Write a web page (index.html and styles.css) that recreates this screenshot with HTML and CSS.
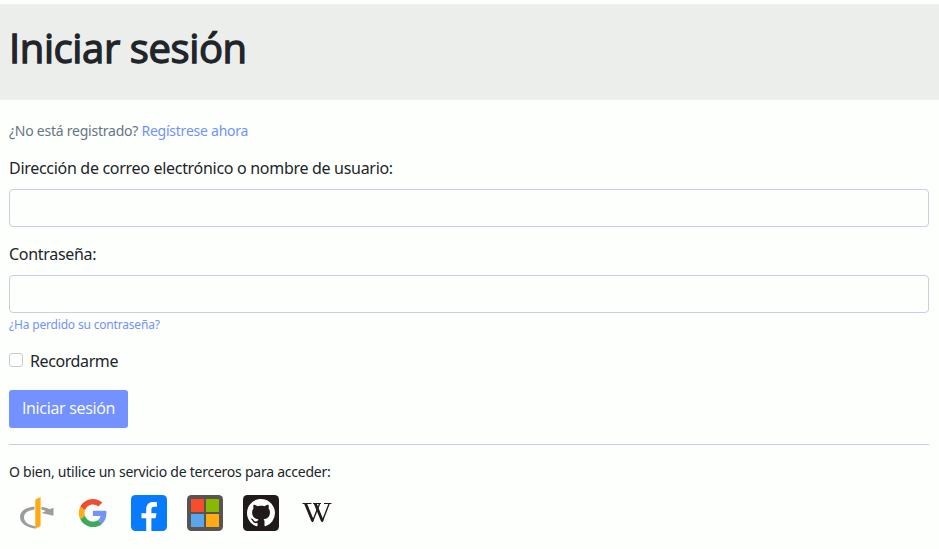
FILE: index.html
```html
<!DOCTYPE html>
<html lang="es">
<head>
<meta charset="utf-8">
<title>Iniciar sesión</title>
<link rel="stylesheet" href="styles.css">
</head>
<body>
<header class="page-header"><h1>Iniciar sesión</h1></header>
<main class="content">
  <p class="register">¿No está registrado? <a href="#">Regístrese ahora</a></p>
  <form>
    <div class="field">
      <label for="user">Dirección de correo electrónico o nombre de usuario:</label>
      <input class="control" id="user" type="text">
    </div>
    <div class="field field-password">
      <label for="password">Contraseña:</label>
      <input class="control" id="password" type="password">
      <a class="lost" href="#">¿Ha perdido su contraseña?</a>
    </div>
    <div class="remember">
      <input class="check" id="remember" type="checkbox">
      <label for="remember">Recordarme</label>
    </div>
    <button class="submit" type="button">Iniciar sesión</button>
  </form>
  <hr>
  <p class="third-party">O bien, utilice un servicio de terceros para acceder:</p>
  <div class="services">
    <a href="#" aria-label="OpenID"><svg viewBox="0 0 36 36"><path d="M15.500 11.500C7 12.300 1 16 1 22c0 6 6.500 10.500 15.500 11.700v-2.500C9.500 30.200 5 27 5 22.200c0-4.200 4-6.900 10.500-7.700zM22.500 11.800c3.200.4 5.700 1.200 8 2.500l4-1.500v8l-12-2.900 4.400-1.800c-1.200-.7-2.700-1.100-4.400-1.300z" fill="#9b9ca0"/><path d="M16.300 4.500 21.600 2v29L16.300 33.700z" fill="#ffa914"/></svg></a>
    <a href="#" aria-label="Google"><svg viewBox="0 0 36 36"><g transform="translate(3.800 3.900) scale(.588)"><path fill="#f24b34" d="M24 9.500c3.540 0 6.710 1.220 9.210 3.600l6.850-6.850C35.900 2.380 30.470 0 24 0 14.620 0 6.510 5.380 2.560 13.220l7.980 6.190C12.430 13.720 17.740 9.500 24 9.500z"/><path fill="#7393fb" d="M46.980 24.550c0-1.570-.15-3.090-.38-4.550H24v9.020h12.940c-.58 2.960-2.260 5.480-4.780 7.180l7.730 6c4.510-4.180 7.090-10.360 7.090-17.650z"/><path fill="#ffad10" d="M10.530 28.590c-.48-1.450-.76-2.990-.76-4.590s.27-3.140.76-4.590l-7.980-6.190C.92 16.460 0 20.120 0 24s.92 7.540 2.560 10.780z"/><path fill="#3da95b" d="M24 48c6.480 0 11.930-2.130 15.890-5.810l-7.730-6c-2.150 1.450-4.920 2.300-8.160 2.300-6.260 0-11.570-4.220-13.470-9.910l-7.970 6.190C6.510 42.620 14.620 48 24 48z"/></g></svg></a>
    <a href="#" aria-label="Facebook"><svg viewBox="0 0 36 36"><rect width="36" height="36" rx="4.500" fill="#087bfb"/><path fill="#fff" d="M15.200 36V23.200h-4.700v-5h4.700v-3.900c0-4.800 2.700-7.300 7-7.300 1.500 0 2.700.1 3.800.3v4.500h-2.600c-2.300 0-3 1.300-3 2.900v3.500h5.100l-.9 5h-4.200V36z"/></svg></a>
    <a href="#" aria-label="Microsoft"><svg viewBox="0 0 36 36"><rect width="36" height="36" rx="4.500" fill="#595450"/><path fill="#f64e2c" d="M4 4h13v13H4z"/><path fill="#86b900" d="M19 4h13v13H19z"/><path fill="#5ba5ed" d="M4 19h13v13H4z"/><path fill="#ffab13" d="M19 19h13v13H19z"/></svg></a>
    <a href="#" aria-label="GitHub"><svg viewBox="0 0 36 36"><rect width="36" height="36" rx="4.500" fill="#211a1b"/><path transform="translate(4 4) scale(1.750)" fill="#fff" d="M8 0C3.580 0 0 3.580 0 8c0 3.540 2.290 6.530 5.470 7.590.4.070.55-.17.55-.38 0-.19-.01-.82-.01-1.490-2.010.37-2.530-.49-2.690-.94-.09-.23-.48-.94-.82-1.130-.28-.15-.68-.52-.01-.53.63-.01 1.080.58 1.230.82.72 1.210 1.870.87 2.330.66.070-.52.28-.87.51-1.070-1.780-.2-3.640-.89-3.640-3.950 0-.87.31-1.590.82-2.150-.08-.2-.36-1.020.08-2.120 0 0 .67-.21 2.200.82.64-.18 1.320-.27 2-.27.68 0 1.360.09 2 .27 1.530-1.040 2.200-.82 2.200-.82.44 1.100.16 1.920.08 2.120.51.56.82 1.270.82 2.150 0 3.070-1.870 3.750-3.650 3.950.29.25.54.73.54 1.480 0 1.070-.01 1.930-.01 2.200 0 .21.15.46.55.38A8.013 8.013 0 0 0 16 8c0-4.420-3.580-8-8-8z"/></svg></a>
    <a href="#" aria-label="Wikipedia"><svg viewBox="0 0 36 36" fill="none" stroke="#211c1c"><path stroke-width="1" d="M3.500 8.500h9M14 8.500h8M25 8.500h7.500"/><path stroke-width="1.400" d="M13.300 27 20.500 9M23 27 30 9"/><path stroke-width="2.800" d="m6.500 8.500 7.200 17.500M16.200 8.500l7.200 17.500"/></svg></a>
  </div>
</main>
</body>
</html>
```
FILE: styles.css
```css
* { box-sizing: border-box; }
body {
  margin: 0;
  padding-top: 4px;
  background: #fdfffd;
  color: #212529;
  font: 16px/24px "Noto Sans", sans-serif;
}
a { color: #7191ff; text-decoration: none; }
.page-header { height: 96px; padding: 20px 9px 0; background: #eceeec; }
h1 {
  margin: 0;
  font: 500 40px/48px "Open Sans", sans-serif;
  letter-spacing: -.4px;
  -webkit-text-stroke: 1.3px #212529;
}
.content { padding: 20px 10px 0 9px; }
.register { margin: 0 0 14px; font-size: 14px; line-height: 22px; color: #667681; letter-spacing: -.24px; }
.field { margin-bottom: 15px; }
.field label { display: block; margin-bottom: 9px; line-height: 24px; letter-spacing: -.3px; }
.control {
  display: block;
  width: 100%;
  height: 38px;
  padding: 6px 12px;
  border: 1px solid #c9cfdc;
  border-radius: 4px;
  background: #fdfffd;
}
.field-password { margin-bottom: 14px; }
.lost { display: block; height: 22px; font-size: 12px; line-height: 23px; letter-spacing: -.18px; }
.remember { display: flex; align-items: center; gap: 7px; height: 24px; margin-bottom: 17px; letter-spacing: -.4px; }
.check {
  appearance: none;
  width: 14px;
  height: 14px;
  margin: 0 0 2px;
  border: 1px solid #c5cad4;
  border-radius: 3px;
}
.submit {
  display: block;
  width: 119px;
  height: 38px;
  padding: 0 0 2px;
  border: 0;
  border-radius: 3px;
  background: #7391ff;
  color: #fdfffd;
  font: 16px/36px "Open Sans", sans-serif;
  letter-spacing: -.3px;
}
hr { height: 1px; margin: 16px 0; border: 0; background: #c9cfdc; }
.third-party { margin: 0 0 12px; font-size: 14px; line-height: 22px; letter-spacing: -.24px; }
.services { display: flex; gap: 20px; padding-left: 10px; }
.services a, .services svg { display: block; width: 36px; height: 36px; }
```
